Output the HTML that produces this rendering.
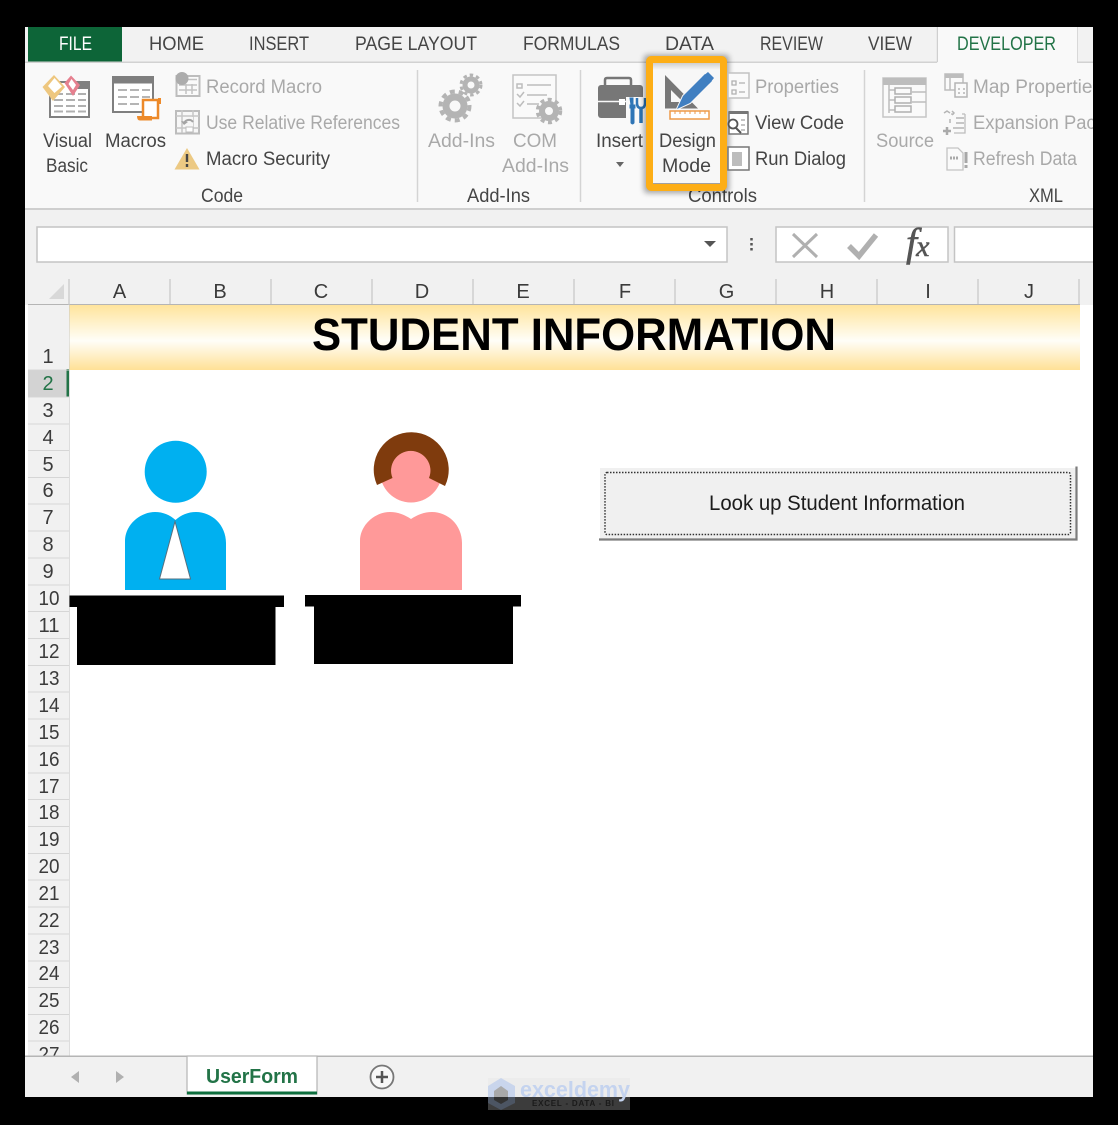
<!DOCTYPE html>
<html><head><meta charset="utf-8"><title>Student Information</title>
<style>
html,body{margin:0;padding:0;background:#000;width:1118px;height:1125px;overflow:hidden}
svg{display:block;position:absolute;left:0;top:0}
text{font-family:"Liberation Sans",sans-serif;font-size:19px;fill:#444}
.g{fill:#a9a9a9}
.h{font-size:20px;fill:#3a3a3a;text-anchor:middle}
.r{font-size:20px;fill:#3a3a3a;text-anchor:middle}
</style></head><body>
<svg width="1118" height="1125" viewBox="0 0 1118 1125" xmlns="http://www.w3.org/2000/svg">
<defs>
<linearGradient id="hd" x1="0" y1="0" x2="0" y2="1"><stop offset="0" stop-color="#ffe49c"/><stop offset=".55" stop-color="#fffef8"/><stop offset="1" stop-color="#ffe196"/></linearGradient>
<linearGradient id="ins" x1="0" y1="0" x2="0" y2="1"><stop offset="0" stop-color="#cfcfcf"/><stop offset="1" stop-color="#f8f8f8"/></linearGradient>
<clipPath id="cl"><rect x="25" y="27" width="1068" height="1070"/></clipPath>
<clipPath id="rc"><rect x="28" y="305" width="41" height="751"/></clipPath>
<filter id="sh" x="-30%" y="-30%" width="160%" height="160%"><feGaussianBlur stdDeviation="3"/></filter>
<filter id="soft" x="-5%" y="-5%" width="110%" height="110%"><feGaussianBlur stdDeviation=".35"/></filter>
</defs>
<rect width="1118" height="1125" fill="#000"/>
<g clip-path="url(#cl)"><g filter="url(#soft)">
<rect x="25" y="27" width="1068" height="1070" fill="#fff"/>
<!-- tab row -->
<rect x="25" y="27" width="1068" height="36" fill="#f2f2f2"/>
<rect x="25" y="63" width="1068" height="146" fill="#f9f9f9"/>
<rect x="25" y="208" width="1068" height="2" fill="#cfcfcf"/>
<rect x="28" y="27" width="94" height="36" fill="#0f6537"/>
<rect x="25" y="61.500" width="912" height="1.500" fill="#d2d2d2"/>
<rect x="1077" y="61.500" width="16" height="1.500" fill="#d2d2d2"/>
<path d="M937.500 62V27M1077 62V27" stroke="#cfcfcf" stroke-width="1.500"/>
<rect x="938" y="27" width="139" height="37" fill="#f9f9f9"/>
<text x="59" y="50" textLength="33" lengthAdjust="spacingAndGlyphs" style="fill:#fff">FILE</text>
<text x="149" y="50" textLength="55" lengthAdjust="spacingAndGlyphs">HOME</text>
<text x="249" y="50" textLength="60" lengthAdjust="spacingAndGlyphs">INSERT</text>
<text x="355" y="50" textLength="122" lengthAdjust="spacingAndGlyphs">PAGE LAYOUT</text>
<text x="523" y="50" textLength="97" lengthAdjust="spacingAndGlyphs">FORMULAS</text>
<text x="665" y="50" textLength="49" lengthAdjust="spacingAndGlyphs">DATA</text>
<text x="760" y="50" textLength="63" lengthAdjust="spacingAndGlyphs">REVIEW</text>
<text x="868" y="50" textLength="44" lengthAdjust="spacingAndGlyphs">VIEW</text>
<text x="957" y="50" textLength="99" lengthAdjust="spacingAndGlyphs" style="fill:#217346">DEVELOPER</text>
<!-- separators -->
<path d="M417.500 70V202M580.500 70V202M864.500 70V202" stroke="#d4d4d4" stroke-width="1.500"/>
<!-- Visual Basic icon -->
<rect x="50" y="82" width="39" height="35" fill="#fff" stroke="#808080" stroke-width="2"/>
<rect x="75" y="81" width="15" height="8" fill="#808080"/>
<path d="M54 100h9m3 0h9m3 0h8M54 106h9m3 0h9m3 0h8M54 111.500h9m3 0h9m3 0h8M54 94h9m3 0h9m3 0h8" stroke="#b0b0b0" stroke-width="2"/>
<path d="M54 75L65 87L53 101L42.500 87Z" fill="#eec77f"/>
<path d="M54.500 78L62 86.500L54.500 93L48 86Z" fill="#fff"/>
<path d="M71 75.500L80 85L73 96L64.500 83Z" fill="#e6808f"/>
<path d="M71.500 79L76 85L73 90L68.500 84Z" fill="#fff"/>
<!-- Macros icon -->
<rect x="113" y="77" width="40" height="35" fill="#fff" stroke="#7f7f7f" stroke-width="2"/>
<rect x="112" y="76" width="42" height="7.500" fill="#7f7f7f"/>
<path d="M118 90h9m3 0h9m3 0h8M118 97h9m3 0h9m3 0h8M118 104h9m3 0h9" stroke="#b5b5b5" stroke-width="2"/>
<rect x="143" y="100" width="15" height="18" fill="#fff" stroke="#ed8a2a" stroke-width="2.500"/>
<path d="M156 98H161V104H158V98Z" fill="#ed8a2a"/>
<path d="M137 116H152V120.500H140Q137 120.500 137 116Z" fill="#ed8a2a"/>
<!-- small code icons -->
<rect x="176.500" y="76" width="23" height="20" fill="#fafafa" stroke="#bdbdbd" stroke-width="2"/>
<path d="M179 85h18M179 90h18M186 84v10M192 84v10M188 79.500h9" stroke="#c2c2c2" stroke-width="1.500"/>
<circle cx="182" cy="78.500" r="6.500" fill="#acacac"/>
<rect x="176" y="111" width="23" height="22.500" fill="#f7f7f7" stroke="#bcbcbc" stroke-width="2"/>
<path d="M176 116h23M182 110v23M193 110v23M176 128h23" stroke="#c6c6c6" stroke-width="1.500"/>
<rect x="183" y="117" width="10" height="10" fill="#f7f7f7"/>
<path d="M184 124a5 5 0 0 1 9 -2" fill="none" stroke="#a4a4a4" stroke-width="2"/><path d="M181 121l3 4 4-3z" fill="#a4a4a4"/>
<rect x="186" y="127" width="7" height="5" fill="#fff" stroke="#bdbdbd"/>
<path d="M187 148L199.500 169.500H174.500Z" fill="#ecc983"/>
<path d="M187 154v8M187 164v3" stroke="#444" stroke-width="2.400"/>
<!-- code text -->
<text x="206" y="93" textLength="116" lengthAdjust="spacingAndGlyphs" class="g">Record Macro</text>
<text x="206" y="129" textLength="194" lengthAdjust="spacingAndGlyphs" class="g">Use Relative References</text>
<text x="206" y="165" textLength="124" lengthAdjust="spacingAndGlyphs">Macro Security</text>
<text x="43" y="147" textLength="49" lengthAdjust="spacingAndGlyphs">Visual</text>
<text x="46" y="172" textLength="42" lengthAdjust="spacingAndGlyphs">Basic</text>
<text x="105" y="147" textLength="61" lengthAdjust="spacingAndGlyphs">Macros</text>
<text x="201" y="202" textLength="42" lengthAdjust="spacingAndGlyphs">Code</text>
<!-- Add-Ins icons -->
<g fill="none" stroke="#b4b4b4">
<circle cx="455" cy="106" r="9" stroke-width="7"/><circle cx="455" cy="106" r="14.500" stroke-width="4" stroke-dasharray="5 4"/>
<circle cx="471" cy="85" r="6" stroke-width="5"/><circle cx="471" cy="85" r="10" stroke-width="3" stroke-dasharray="3.500 3"/>
</g>
<rect x="513" y="75" width="43" height="43" fill="#fafafa" stroke="#c4c4c4" stroke-width="1.500"/>
<path d="M517 84h5v4h-5zM527 85h24M517 94l3 3 4-5M527 95h20M517 103l3 3 4-5M527 104h12" fill="none" stroke="#bdbdbd" stroke-width="1.500"/>
<circle cx="549" cy="111" r="7" fill="#f9f9f9" stroke="#b4b4b4" stroke-width="6"/><circle cx="549" cy="111" r="11.500" fill="none" stroke="#b4b4b4" stroke-width="3.500" stroke-dasharray="4 3.500"/>
<text x="428" y="147" textLength="67" lengthAdjust="spacingAndGlyphs" class="g">Add-Ins</text>
<text x="513" y="147" textLength="44" lengthAdjust="spacingAndGlyphs" class="g">COM</text>
<text x="502" y="172" textLength="67" lengthAdjust="spacingAndGlyphs" class="g">Add-Ins</text>
<text x="467" y="202" textLength="63" lengthAdjust="spacingAndGlyphs">Add-Ins</text>
<!-- Insert icon -->
<path d="M605 85v-5q0-2 2-2h22q2 0 2 2v5" fill="none" stroke="#777" stroke-width="2.500"/>
<rect x="598" y="85" width="45" height="33" rx="3" fill="#777"/>
<path d="M598 101.500H640" stroke="#f9f9f9" stroke-width="1.500"/>
<rect x="619" y="99" width="6" height="6" fill="#fff"/>
<rect x="626" y="97" width="20" height="28" fill="#f9f9f9"/>
<path d="M630 98h3v7h2v3h-1v15q-1.500 2-3 0v-15h-1v-3h1z" fill="#2e75b6" stroke="#2e75b6"/>
<path d="M641 123V108" stroke="#2e75b6" stroke-width="3.500"/>
<path d="M637 98v5q0 5 4 5q4 0 4-5v-5" fill="none" stroke="#2e75b6" stroke-width="2.500"/>
<path d="M616 162h8l-4 5z" fill="#666"/>
<text x="596" y="147" textLength="47" lengthAdjust="spacingAndGlyphs">Insert</text>
<!-- Controls text under box -->
<text x="688" y="202" textLength="69" lengthAdjust="spacingAndGlyphs">Controls</text>
<!-- Design Mode -->
<rect x="644" y="55" width="85" height="138" rx="3" fill="#000" opacity=".35" filter="url(#sh)"/>
<rect x="653" y="63" width="67" height="120" fill="#f7f7f7"/>
<rect x="653" y="63" width="67" height="7" fill="url(#ins)"/>
<path d="M665 75L698 108.500H665ZM671 90V102H683Z" fill="#777" fill-rule="evenodd"/>
<path d="M677 109L683 96L705 74L712 81L690 103Z" fill="#f7f7f7" stroke="#f7f7f7" stroke-width="2"/>
<path d="M677 109L683 96L705 74L712 81L690 103Z" fill="#3f7fc1"/>
<path d="M702.500 76.500L708 72L714 78L709.500 83.500Z" fill="#3f7fc1"/>
<rect x="670" y="111" width="39" height="8" fill="#fff" stroke="#ed9a4a" stroke-width="1.500"/>
<path d="M675 111v3M680 111v3M685 111v3M690 111v3M695 111v3M700 111v3M705 111v3" stroke="#ed9a4a"/>
<text x="659" y="147" textLength="57" lengthAdjust="spacingAndGlyphs">Design</text>
<text x="662" y="172" textLength="49" lengthAdjust="spacingAndGlyphs">Mode</text>
<rect x="649.500" y="59.500" width="74" height="128" rx="2" fill="none" stroke="#fdae13" stroke-width="7"/>
<!-- Controls small -->
<rect x="728" y="73" width="21" height="25" fill="#fafafa" stroke="#c2c2c2" stroke-width="1.500"/>
<path d="M732 81h4v4h-4zM732 90h4v4h-4zM739 83h6M739 92h6" fill="none" stroke="#b0b0b0" stroke-width="1.300"/>
<rect x="729" y="112" width="19" height="22" fill="#fff" stroke="#777" stroke-width="1.500"/>
<rect x="729" y="111" width="19" height="3" fill="#777"/>
<path d="M741 120h4M741 125h4M741 130h4" stroke="#888"/>
<circle cx="733" cy="124" r="4.500" fill="#fff" stroke="#555" stroke-width="1.800"/><path d="M736 128l5 5" stroke="#555" stroke-width="2"/>
<rect x="728" y="147" width="21" height="23" fill="#fff" stroke="#777" stroke-width="1.500"/>
<rect x="732" y="152" width="10" height="14" fill="#bdbdbd"/>
<text x="755" y="93" textLength="84" lengthAdjust="spacingAndGlyphs" class="g">Properties</text>
<text x="755" y="129" textLength="89" lengthAdjust="spacingAndGlyphs">View Code</text>
<text x="755" y="165" textLength="91" lengthAdjust="spacingAndGlyphs">Run Dialog</text>
<!-- XML -->
<rect x="883" y="78" width="43" height="39" fill="#fafafa" stroke="#c6c6c6" stroke-width="1.500"/>
<rect x="883" y="78" width="43" height="7" fill="#bdbdbd"/>
<path d="M889 85v28M889 90h6M889 100h6M889 110h6M912 92h14M912 102h14" stroke="#bdbdbd" stroke-width="1.500" fill="none"/>
<rect x="895" y="88" width="16" height="6" fill="none" stroke="#b0b0b0" stroke-width="1.500"/>
<rect x="895" y="97" width="16" height="6" fill="none" stroke="#b0b0b0" stroke-width="1.500"/>
<rect x="895" y="106" width="16" height="6" fill="none" stroke="#b0b0b0" stroke-width="1.500"/>
<rect x="945" y="74" width="18" height="16" fill="#fafafa" stroke="#bdbdbd" stroke-width="1.500"/>
<rect x="945" y="74" width="18" height="4" fill="#bdbdbd"/>
<path d="M950 77v13" stroke="#bdbdbd" stroke-width="1.500"/>
<rect x="955" y="83" width="12" height="14" fill="#fafafa" stroke="#b5b5b5" stroke-width="1.500"/>
<path d="M958 89h2M963 89h2M958 93h2M963 93h2" stroke="#b5b5b5" stroke-width="1.500"/>
<path d="M951 114h3M962 114h3M965 114v19h-11" fill="none" stroke="#bdbdbd" stroke-width="1.300"/>
<path d="M944 113l3-2 3 2M952 111l2 2-2 2M950 119v4M956 118h8M956 123h8M953 128h11" fill="none" stroke="#b5b5b5" stroke-width="1.500"/>
<path d="M943 131h8M947 127v8" stroke="#aaa" stroke-width="2.500"/>
<path d="M947 148h11l5 5v17h-16z" fill="#fafafa" stroke="#c4c4c4" stroke-width="1.300"/>
<path d="M950 158h9" stroke="#aaa" stroke-width="3" stroke-dasharray="2 1"/>
<path d="M966 152v11M966 165v3" stroke="#a8a8a8" stroke-width="3"/>
<text x="876" y="147" textLength="58" lengthAdjust="spacingAndGlyphs" class="g">Source</text>
<text x="973" y="93" textLength="129" lengthAdjust="spacingAndGlyphs" class="g">Map Properties</text>
<text x="973" y="129" textLength="141" lengthAdjust="spacingAndGlyphs" class="g">Expansion Packs</text>
<text x="973" y="165" textLength="104" lengthAdjust="spacingAndGlyphs" class="g">Refresh Data</text>
<text x="1029" y="202" textLength="34" lengthAdjust="spacingAndGlyphs">XML</text>
<!-- formula bar -->
<rect x="25" y="210" width="1068" height="65" fill="#f1f1f1"/>
<rect x="37" y="227" width="690" height="35" fill="#fff" stroke="#c4c4c4" stroke-width="1.500"/>
<path d="M704 241h12l-6 6z" fill="#555"/>
<path d="M751.500 238v2.500M751.500 243v2.500M751.500 248v2.500" stroke="#555" stroke-width="2.500"/>
<rect x="776" y="227" width="172" height="35" fill="#fff" stroke="#c4c4c4" stroke-width="1.500"/>
<path d="M793 234L817 257M817 234L793 257" stroke="#b0b0b0" stroke-width="3"/>
<path d="M849 246L859 256L876 235" fill="none" stroke="#b0b0b0" stroke-width="5.500"/>
<text x="906" y="256" style="font-family:'Liberation Serif',serif;font-style:italic;font-size:40px;fill:#555;stroke:#555;stroke-width:.6">f<tspan dx="-1" style="font-size:30px">x</tspan></text>
<rect x="954.500" y="227" width="150" height="35" fill="#fff" stroke="#c4c4c4" stroke-width="1.500"/>
<!-- column header -->
<rect x="25" y="275" width="1068" height="30" fill="#f1f1f1"/>
<rect x="28" y="304" width="1052" height="1.500" fill="#b5b5b5"/>
<path d="M64 284V299H49Z" fill="#d8d8d8"/>
<path d="M69 279V1056M170 279V304M271 279V304M372 279V304M473 279V304M574 279V304M675 279V304M776 279V304M877 279V304M978 279V304M1079 279V304" stroke="#c6c6c6" stroke-width="1.200"/>
<text x="119.500" y="298" class="h">A</text><text x="220" y="298" class="h">B</text><text x="321" y="298" class="h">C</text><text x="422" y="298" class="h">D</text><text x="523" y="298" class="h">E</text><text x="625" y="298" class="h">F</text><text x="726.500" y="298" class="h">G</text><text x="827" y="298" class="h">H</text><text x="928" y="298" class="h">I</text><text x="1029" y="298" class="h">J</text>
<!-- row header -->
<rect x="28" y="305" width="41" height="751" fill="#f1f1f1"/>
<rect x="28" y="370" width="40" height="27" fill="#d3d3d3"/>
<rect x="66.500" y="369" width="2.500" height="28" fill="#217346"/>
<path d="M28 370H69M28 397H69M28 424H69M28 450.500H69M28 477.500H69M28 504H69M28 531H69M28 558H69M28 585H69M28 611.500H69M28 638.500H69M28 665.500H69M28 692H69M28 719H69M28 746H69M28 773H69M28 799.500H69M28 826.500H69M28 853.500H69M28 880H69M28 907H69M28 934H69M28 961H69M28 987.500H69M28 1014.500H69M28 1041H69" stroke="#d6d6d6"/>
<g clip-path="url(#rc)">
<text x="48" y="363" class="r">1</text><text x="48" y="390" class="r" style="fill:#217346">2</text><text x="48" y="417" class="r">3</text><text x="48" y="444" class="r">4</text><text x="48" y="471" class="r">5</text><text x="48" y="497" class="r">6</text><text x="48" y="524" class="r">7</text><text x="48" y="551" class="r">8</text><text x="48" y="578" class="r">9</text><text x="49" y="605" class="r" textLength="21" lengthAdjust="spacingAndGlyphs">10</text><text x="49" y="632" class="r" textLength="21" lengthAdjust="spacingAndGlyphs">11</text><text x="49" y="658" class="r" textLength="21" lengthAdjust="spacingAndGlyphs">12</text><text x="49" y="685" class="r" textLength="21" lengthAdjust="spacingAndGlyphs">13</text><text x="49" y="712" class="r" textLength="21" lengthAdjust="spacingAndGlyphs">14</text><text x="49" y="739" class="r" textLength="21" lengthAdjust="spacingAndGlyphs">15</text><text x="49" y="766" class="r" textLength="21" lengthAdjust="spacingAndGlyphs">16</text><text x="49" y="793" class="r" textLength="21" lengthAdjust="spacingAndGlyphs">17</text><text x="49" y="819" class="r" textLength="21" lengthAdjust="spacingAndGlyphs">18</text><text x="49" y="846" class="r" textLength="21" lengthAdjust="spacingAndGlyphs">19</text><text x="49" y="873" class="r" textLength="21" lengthAdjust="spacingAndGlyphs">20</text><text x="49" y="900" class="r" textLength="21" lengthAdjust="spacingAndGlyphs">21</text><text x="49" y="927" class="r" textLength="21" lengthAdjust="spacingAndGlyphs">22</text><text x="49" y="954" class="r" textLength="21" lengthAdjust="spacingAndGlyphs">23</text><text x="49" y="980" class="r" textLength="21" lengthAdjust="spacingAndGlyphs">24</text><text x="49" y="1007" class="r" textLength="21" lengthAdjust="spacingAndGlyphs">25</text><text x="49" y="1034" class="r" textLength="21" lengthAdjust="spacingAndGlyphs">26</text><text x="49" y="1061" class="r" textLength="21" lengthAdjust="spacingAndGlyphs">27</text>
</g>
<!-- title band -->
<rect x="69.500" y="305" width="1010.500" height="65" fill="url(#hd)"/>
<text x="312" y="350" textLength="524" lengthAdjust="spacingAndGlyphs" style="font-size:45px;font-weight:bold;fill:#000">STUDENT INFORMATION</text>
<!-- male figure -->
<circle cx="175.700" cy="471.700" r="31" fill="#00b0f0"/>
<path d="M125 590V541C125 525 140 512 155 512C163 512 170 515 175.500 520C181 515 188 512 196 512C212 512 226 525 226 543V590Z" fill="#00b0f0"/>
<path d="M175 521.500L159.500 579H190.500Z" fill="#fff" stroke="#56707f" stroke-width="1"/>
<path d="M69.500 595.500H284V607H275.500V665H77V607H69.500Z" fill="#000"/>
<!-- female figure -->
<circle cx="411" cy="471.500" r="31" fill="#ff9999"/>
<path d="M377 485A37.500 37.500 0 1 1 445 486L429 478A19.700 19.700 0 1 0 392.500 478Z" fill="#7f3a09"/>
<path d="M360 590V541C360 525 375 512 390 512C398 512 405 515 411 519C417 515 424 512 432 512C448 512 462 525 462 543V590Z" fill="#ff9999"/>
<path d="M305 595H521V606.500H513V664H314V606.500H305Z" fill="#000"/>
<!-- button -->
<rect x="600" y="468" width="476" height="72" fill="#f0f0f0"/>
<path d="M599 539.500H1076.500V466.500" fill="none" stroke="#7d7d7d" stroke-width="2.200"/>
<rect x="605" y="472.500" width="465.500" height="62" rx="2" fill="none" stroke="#333" stroke-width="1.500" stroke-dasharray="1.500 1.500"/>
<text x="709" y="510" textLength="256" lengthAdjust="spacingAndGlyphs" style="font-size:21px;fill:#1a1a1a">Look up Student Information</text>
<!-- sheet tabs -->
<rect x="25" y="1056" width="1068" height="41" fill="#f1f1f1"/>
<rect x="25" y="1055.500" width="1068" height="1.500" fill="#b5b5b5"/>
<rect x="187" y="1056" width="130" height="38" fill="#fff" stroke="#b5b5b5" stroke-width="1.200"/>
<rect x="187" y="1091.500" width="130" height="3" fill="#0f6e3c"/>
<text x="206" y="1083" textLength="92" lengthAdjust="spacingAndGlyphs" style="font-size:20px;font-weight:bold;fill:#217346">UserForm</text>
<path d="M79 1071V1083L71 1077ZM116 1071V1083L124 1077Z" fill="#b0b0b0"/>
<circle cx="382" cy="1077" r="11.500" fill="#f8f8f8" stroke="#777" stroke-width="1.800"/>
<path d="M376 1077H388M382 1071V1083" stroke="#555" stroke-width="2.500"/>
</g></g>
<!-- watermark -->
<rect x="488" y="1097" width="142" height="13" fill="#3c3c3c"/>
<rect x="488" y="1078" width="142" height="19" fill="#ececec"/>
<path d="M501 1078L515 1086V1097H488V1086Z" fill="#c9d5ec"/>
<path d="M488 1097H515V1103L501 1110L488 1103Z" fill="#4c5563"/>
<path d="M501 1086L508 1091V1097H494V1091Z" fill="#a9a9a9"/>
<path d="M494 1097H508V1100L501 1104L494 1100Z" fill="#333"/>
<text x="520" y="1097" textLength="110" lengthAdjust="spacingAndGlyphs" style="font-size:22px;font-weight:bold;fill:#c4d3ef">exceldemy</text>
<text x="532" y="1106" textLength="82" lengthAdjust="spacing" style="font-size:8px;font-weight:bold;fill:#1a1a1a">EXCEL - DATA - BI</text>
</svg>
</body></html>
